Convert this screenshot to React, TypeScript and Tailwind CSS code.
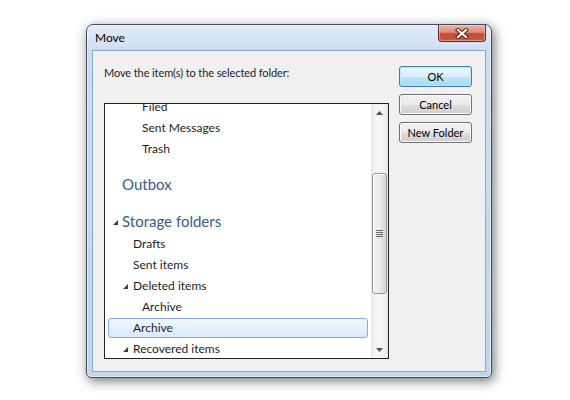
import React from 'react'

// Folder tree rows shown inside the picker list
type Row =
  | { kind: 'item'; label: string; indent: number; expander?: boolean; selected?: boolean }
  | { kind: 'header'; label: string; expander?: boolean; pad: string }

const ROWS: Row[] = [
  { kind: 'item', label: 'Filed', indent: 37 },
  { kind: 'item', label: 'Sent Messages', indent: 37 },
  { kind: 'item', label: 'Trash', indent: 37 },
  { kind: 'header', label: 'Outbox', pad: 'pt-[15px] pb-[3px]' },
  { kind: 'header', label: 'Storage folders', expander: true, pad: 'pt-[14px] pb-[2px]' },
  { kind: 'item', label: 'Drafts', indent: 28 },
  { kind: 'item', label: 'Sent items', indent: 28 },
  { kind: 'item', label: 'Deleted items', indent: 28, expander: true },
  { kind: 'item', label: 'Archive', indent: 37 },
  { kind: 'item', label: 'Archive', indent: 28, selected: true },
  { kind: 'item', label: 'Recovered items', indent: 28, expander: true },
]

const FONT = "font-['Lato','Noto_Sans',sans-serif]"

function Expander({ className = '' }: { className?: string }) {
  return (
    <svg width="5" height="5" viewBox="0 0 5 5" className={className}>
      <polygon points="5,0 5,5 0,5" fill="#404040" />
    </svg>
  )
}

function TreeRow({ row }: { row: Row }) {
  if (row.kind === 'header') {
    return (
      <div className={`relative flex items-center ${row.pad}`}>
        {row.expander && <Expander className="absolute left-[8px] top-[23px]" />}
        <span className="pl-[17px] text-[15px] leading-[20px] text-[#3b5b8c]">{row.label}</span>
      </div>
    )
  }
  return (
    <div className="relative h-[21px]">
      {row.selected && (
        <div className="absolute left-[3px] right-[3px] top-[1px] bottom-0 rounded-[3px] border border-[#84acdd] bg-[linear-gradient(to_bottom,#f1f7fe,#d8e9fc)]" />
      )}
      {row.expander && <Expander className="absolute left-[18px] top-[9px]" />}
      <span
        className="relative block text-[12px] leading-[21px] text-[#1e1e1e]"
        style={{ paddingLeft: row.indent }}
      >
        {row.label}
      </span>
    </div>
  )
}

function ScrollArrow({ up }: { up?: boolean }) {
  return (
    <div className="flex h-[17px] items-center justify-center">
      <svg width="7" height="4" viewBox="0 0 7 4">
        <polygon points={up ? '3.5,0 7,4 0,4' : '0,0 7,0 3.5,4'} fill="#555" />
      </svg>
    </div>
  )
}

function ScrollBar() {
  return (
    <div className="flex w-[17px] flex-col bg-[linear-gradient(to_right,#e6e6e6,#f6f6f6_30%,#f3f3f3_70%,#e8e8e8)]">
      <ScrollArrow up />
      <div className="flex-1">
        <div className="mx-[1px] mt-[52px] flex h-[121px] items-center justify-center rounded-[3px] border border-[#979797] bg-[linear-gradient(to_right,#f4f4f4,#e9e9e9_50%,#d6d6d6)] shadow-[inset_1px_1px_0_#fff]">
          <div className="flex flex-col gap-[1px]">
            {[0, 1, 2, 3].map((i) => (
              <div key={i} className="h-[1px] w-[7px] bg-[#6a6a6a]" />
            ))}
          </div>
        </div>
      </div>
      <ScrollArrow />
    </div>
  )
}

function DialogButton({ children, primary }: { children: React.ReactNode; primary?: boolean }) {
  return (
    <button
      type="button"
      className={`h-[21px] w-[73px] rounded-[3px] border text-[11px] leading-none text-black ${
        primary
          ? 'border-[#3c7fb1] bg-[linear-gradient(to_bottom,#eaf6fd_0%,#d9f0fc_50%,#bee6fd_51%,#a7d9f5_100%)] shadow-[inset_0_0_0_1px_#c4e5f6]'
          : 'border-[#707070] bg-[linear-gradient(to_bottom,#f2f2f2_0%,#ebebeb_50%,#dddddd_51%,#cfcfcf_100%)] shadow-[inset_0_0_0_1px_#fbfbfb]'
      }`}
    >
      {children}
    </button>
  )
}

function CloseButton() {
  return (
    <div className="mr-[5px] flex h-[17px] w-[48px] items-center justify-center rounded-b-[4px] border border-t-0 border-[#6a2a22] bg-[linear-gradient(to_bottom,#ebb3a6_0%,#dd8b7a_45%,#c84a33_55%,#c45d44_100%)] shadow-[inset_0_0_0_1px_rgba(255,255,255,0.35)]">
      <svg width="14" height="11" viewBox="0 0 14 11">
        <path d="M3 2 L11 9 M11 2 L3 9" stroke="#5a1e16" strokeWidth="4.2" strokeLinecap="square" />
        <path d="M3 2 L11 9 M11 2 L3 9" stroke="#fff" strokeWidth="2.2" strokeLinecap="square" />
      </svg>
    </div>
  )
}

export default function App() {
  return (
    <div className={`h-[400px] w-[570px] overflow-hidden bg-white pl-[86px] pt-[24px] ${FONT}`}>
      <div className="flex h-[354px] w-[406px] flex-col rounded-t-[7px] rounded-b-[5px] border border-[#3d4b5c] bg-[linear-gradient(to_bottom,#e2ecf8,#cadcf1_30px,#bfd6f0)] shadow-[inset_0_0_0_1px_rgba(255,255,255,0.55),2px_3px_12px_rgba(0,0,0,0.55)]">
        {/* title bar */}
        <div className="flex h-[25px] items-start justify-between">
          <span className="pl-[8px] pt-[5px] text-[12px] leading-[16px] text-black">Move</span>
          <CloseButton />
        </div>

        {/* client area */}
        <div className="mx-[5px] flex flex-1 border border-[#8fa9c9] bg-[#f0f0f0] pl-[11px] pt-[14px]">
          <div className="flex w-[285px] flex-col">
            <p className="h-[16px] text-[11px] leading-[16px] tracking-[-0.1px] text-[#1e1e1e]">
              Move the item(s) to the selected folder:
            </p>
            <div className="mt-[22px] flex h-[256px] border border-[#222] bg-white">
              <div className="flex-1 overflow-hidden">
                <div className="-mt-[8px]">
                  {ROWS.map((row, i) => (
                    <TreeRow key={i} row={row} />
                  ))}
                </div>
              </div>
              <ScrollBar />
            </div>
          </div>

          <div className="ml-[10px] flex flex-col gap-[7px] pt-[1px]">
            <DialogButton primary>OK</DialogButton>
            <DialogButton>Cancel</DialogButton>
            <DialogButton>New Folder</DialogButton>
          </div>
        </div>
        <div className="h-[5px]" />
      </div>
    </div>
  )
}
